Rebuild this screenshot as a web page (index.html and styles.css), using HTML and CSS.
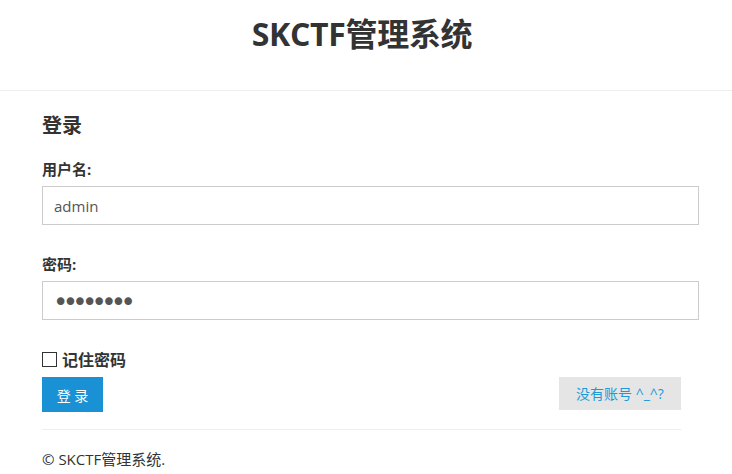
FILE: index.html
```html
<!DOCTYPE html>
<html lang="zh-CN">

<head>
    <meta charset="UTF-8">
    <meta name="viewport" content="width=device-width, initial-scale=1.0">
    <title>SKCTF管理系统 - 登录</title>
    <link rel="stylesheet" href="styles.css">
</head>

<body>
    <div class="header">
        <h1>SKCTF管理系统</h1>
    </div>

    <div class="main">
        <h3>登录</h3>
        <form class="login-form">
            <label class="field-label" for="username">用户名:</label>
            <input class="field-input" type="text" id="username" value="admin">

            <label class="field-label second" for="password">密码:</label>
            <input class="field-input pwd" type="password" id="password" value="12345678">

            <label class="remember">
                <input type="checkbox" class="check">
                <span>记住密码</span>
            </label>

            <div class="actions">
                <button type="button" class="btn-login">登 录</button>
                <a class="btn-register" href="#">没有账号 ^_^?</a>
            </div>
        </form>

        <div class="footer">© SKCTF管理系统.</div>
    </div>
</body>

</html>
```

FILE: styles.css
```css
body {
    margin: 0;
    font-family: "Open Sans", "Noto Sans CJK SC", sans-serif;
    color: #333;
    background: #fff;
}

.header {
    height: 90px;
    border-bottom: 1px solid #eee;
    text-align: center;
}

.header h1 {
    margin: 0;
    padding: 12px 8px 0 0;
    font-size: 32px;
    line-height: 44px;
    font-weight: bold;
    letter-spacing: -0.3px;
}

.main {
    width: 657px;
    margin-left: 42px;
}

.main h3 {
    margin: 23px 0 0;
    font-size: 20px;
    line-height: 24px;
    font-weight: bold;
}

.login-form {
    display: flex;
    flex-direction: column;
}

.field-label {
    margin-top: 21px;
    font-size: 15px;
    line-height: 20px;
    font-weight: bold;
}

.field-label.second {
    margin-top: 29px;
}

.field-input {
    margin-top: 7px;
    height: 39px;
    box-sizing: border-box;
    padding: 0 11px;
    border: 1px solid #ccc;
    border-radius: 0;
    font-family: "Open Sans", sans-serif;
    font-size: 15px;
    color: #555;
    outline: none;
}

.field-input.pwd {
    font-family: "DejaVu Sans", sans-serif;
    font-size: 26px;
    letter-spacing: -5.7px;
    padding: 2px 11px 0 10px;
}

.remember {
    margin-top: 30px;
    display: flex;
    align-items: center;
    gap: 5px;
    font-size: 16px;
    line-height: 20px;
    font-weight: bold;
}

.check {
    appearance: none;
    margin: 0 0 2px;
    width: 15px;
    height: 15px;
    border: 1px solid #333;
    background: #fff;
}

.actions {
    margin-top: 7px;
    width: 639px;
    display: flex;
    justify-content: space-between;
    align-items: flex-start;
    padding-bottom: 17px;
    border-bottom: 1px solid #eee;
}

.btn-login {
    width: 61px;
    height: 35px;
    border: none;
    border-radius: 0;
    background: #1a90d5;
    color: #fff;
    font-family: "Open Sans", "Noto Sans CJK SC", sans-serif;
    font-size: 14px;
    cursor: pointer;
}

.btn-register {
    width: 122px;
    height: 33px;
    line-height: 33px;
    text-align: center;
    background: #e5e5e5;
    color: #1a9ad8;
    font-size: 14px;
    text-decoration: none;
}

.footer {
    margin-top: 19px;
    font-size: 15px;
    line-height: 20px;
}
```
